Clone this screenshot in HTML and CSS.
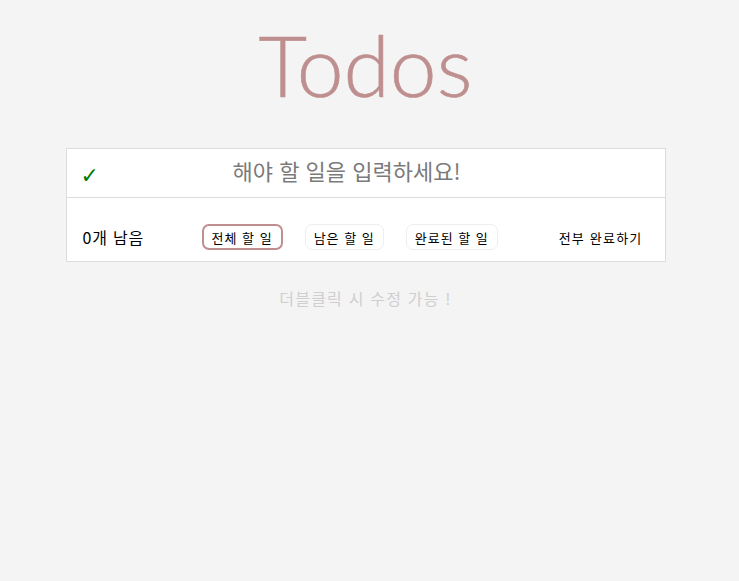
FILE: index.html
```html
<!DOCTYPE html>
<html lang="ko">
<head>
<meta charset="utf-8">
<title>Todos</title>
<link rel="stylesheet" href="styles.css">
</head>
<body>
<div class="app">
  <h1 class="title">Todos</h1>
  <section class="board">
    <div class="entry">
      <span class="check">✓</span>
      <input class="new-todo" type="text" placeholder="해야 할 일을 입력하세요!">
    </div>
    <div class="footer">
      <span class="count">0개 남음</span>
      <div class="filters">
        <button class="filter active">전체 할 일</button>
        <button class="filter">남은 할 일</button>
        <button class="filter">완료된 할 일</button>
      </div>
      <button class="complete-all">전부 완료하기</button>
    </div>
  </section>
  <p class="hint">더블클릭 시 수정 가능 !</p>
</div>
</body>
</html>
```
FILE: styles.css
```css
* { box-sizing: border-box; }
html, body { margin: 0; padding: 0; }
body {
  background: #f4f4f4;
  font-family: "Noto Sans", "Noto Sans CJK KR", sans-serif;
  color: #000;
  padding-right: 8px;
}
.app {
  width: 600px;
  margin: 0 auto;
  padding-top: 18px;
  display: flex;
  flex-direction: column;
  align-items: stretch;
}
.title {
  margin: 0;
  text-align: center;
  font-family: "Lato", sans-serif;
  font-weight: 300;
  font-size: 84px;
  line-height: 93px;
  color: #bf8f8f;
  -webkit-text-stroke: 0.6px #bf8f8f;
  height: 130px;
}
.board {
  background: #fff;
  border: 1px solid #dcdcdc;
}
.entry {
  display: flex;
  align-items: center;
  height: 49px;
  border-bottom: 1px solid #dcdcdc;
  padding: 0 0 0 14px;
}
.check {
  color: #007a00;
  font-size: 22px;
  font-weight: bold;
  width: 30px;
  padding-top: 4px;
  font-family: "DejaVu Sans", sans-serif;
}
.new-todo {
  flex: 1;
  border: none;
  outline: none;
  background: transparent;
  font-family: "Noto Sans CJK KR", sans-serif;
  font-size: 22px;
  padding: 0 0 6px 122px;
  color: #777;
}
.new-todo::placeholder { color: #7a7a7a; }
.footer {
  display: flex;
  align-items: center;
  padding: 26px 14px 11px 16px;
}
.count {
  font-family: "Noto Sans CJK KR", sans-serif;
  font-size: 16px;
  letter-spacing: 0.8px;
  width: 119px;
}
.filters {
  display: flex;
  gap: 22px;
  flex: 1;
}
.filter, .complete-all {
  font-family: "Noto Sans CJK KR", sans-serif;
  font-size: 13px;
  background: #fff;
  color: #000;
  border: 1px solid #eee;
  border-radius: 7px;
  height: 26px;
  padding: 0 8px;
  letter-spacing: 1px;
  cursor: pointer;
}
.filter.active { border: 2px solid #bf8f8f; }
.complete-all { border-color: transparent; letter-spacing: 1.2px; padding: 0 7px 0 8px; }
.hint {
  margin: 24px 0 0;
  text-align: center;
  font-family: "Noto Sans CJK KR", sans-serif;
  font-size: 16px;
  color: #cfcfcf;
  letter-spacing: 1.2px;
}
```
